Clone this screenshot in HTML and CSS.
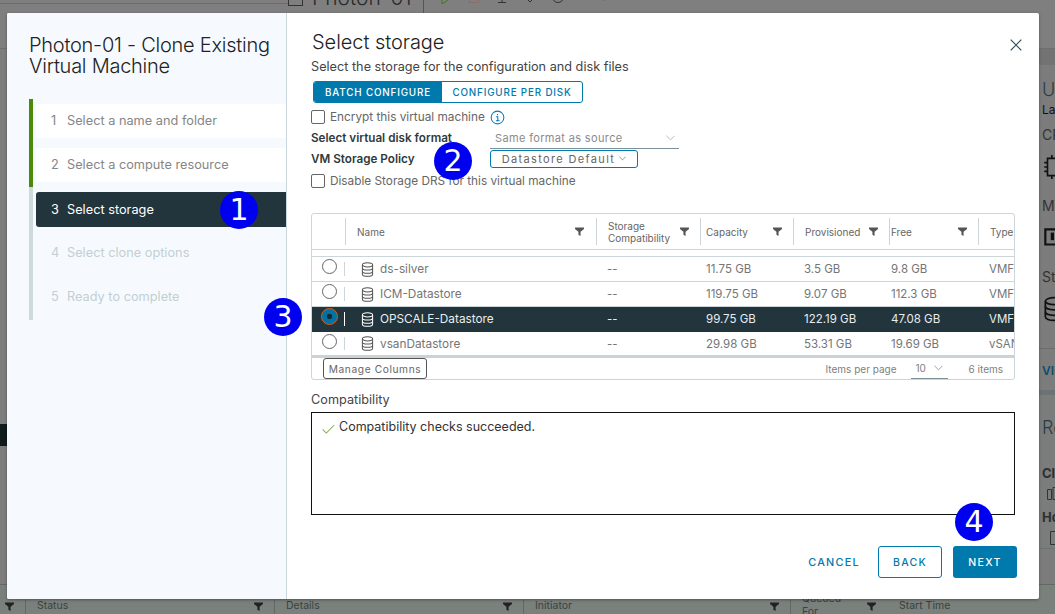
FILE: index.html
```html
<!DOCTYPE html>
<html lang="en">
<head>
<meta charset="utf-8">
<title>Photon-01 - Clone Existing Virtual Machine</title>
<link rel="stylesheet" href="styles.css">
</head>
<body>
<svg class="sprites" width="0" height="0" aria-hidden="true">
  <symbol id="funnel" viewBox="0 0 10 10"><path d="M0 0.5h10v1.6L6.2 5.4V10L3.8 8.6V5.4L0 2.1z"/></symbol>
  <symbol id="db" viewBox="0 0 14 16"><g fill="none" stroke="currentColor" stroke-width="1.1"><path d="M1.5 3v10c0 1.3 2.5 2.3 5.500 2.300s5.500-1 5.500-2.300V3"/><ellipse cx="7" cy="3" rx="5.500" ry="2.200"/><path d="M1.500 6.300c0 1.300 2.500 2.200 5.500 2.200s5.500-.9 5.500-2.200M1.500 9.800c0 1.300 2.500 2.200 5.500 2.200s5.500-.9 5.500-2.200"/></g></symbol>
</svg>

<div class="backdrop">
  <header class="bg-top">
    <div class="bg-toolbar">
      <span class="bg-vmicon"></span>
      <span class="bg-name">Photon-01</span>
      <span class="bg-div"></span>
      <svg class="bg-tool" viewBox="0 0 12 12"><path d="M2 0v12l9-6z" fill="none" stroke="#3f7a1f"/></svg>
      <svg class="bg-tool" viewBox="0 0 12 12"><path d="M1.500 1.500h9v9h-9z" fill="none" stroke="#8c6b6b"/></svg>
      <svg class="bg-tool" viewBox="0 0 12 12"><path d="M0 4h12M6 4v6M2 10.500h8" fill="none" stroke="#333"/></svg>
      <svg class="bg-tool" viewBox="0 0 12 12"><path d="M1 5l5 5 5-5M3 3l5 5" fill="none" stroke="#333"/></svg>
      <svg class="bg-tool" viewBox="0 0 12 12"><path d="M1 6c0 6 10 6 10 0" fill="none" stroke="#333"/></svg>
      <span class="bg-actions">⋮ ACTIONS</span>
    </div>
  </header>
  <div class="bg-mid">
    <div class="bg-left"><span class="bg-dark"></span></div>
    <aside class="bg-right">
      <section class="bg-card">
        <div class="bg-h">U</div>
        <div class="bg-s">Last</div>
        <div class="bg-l">CPU</div>
        <svg class="bg-ic" viewBox="0 0 20 24"><path d="M4 4h12v16H4zM1 8h3M1 12h3M1 16h3M8 1v3M12 1v3M8 20v3M12 20v3" fill="none" stroke="#111" stroke-width="1.500"/></svg>
        <div class="bg-l">Mem</div>
        <svg class="bg-ic" viewBox="0 0 20 24"><path d="M2 4h18v14H2z" fill="none" stroke="#111" stroke-width="2"/><path d="M7 7h3v7H7z" fill="#111"/></svg>
        <div class="bg-l">Sto</div>
        <svg class="bg-ic db-ic"><use href="#db"/></svg>
        <div class="bg-view">VIEW</div>
      </section>
      <section class="bg-card2">
        <div class="bg-h">Re</div>
        <div class="bg-b">Cl</div>
        <svg class="bg-ic2 i1" viewBox="0 0 20 14"><path d="M.5 2.500h4v10h-4zM6 .5h13v12H6z" fill="none" stroke="#333"/></svg>
        <div class="bg-b">Ho</div>
        <svg class="bg-ic2 i2" viewBox="0 0 20 14"><path d="M.5.5h13v13H.5z" fill="none" stroke="#333"/><path d="M7 9h4v3H7z" fill="#333"/></svg>
      </section>
    </aside>
  </div>
  <div class="bg-table">
    <span class="bg-col c1"><svg class="fn"><use href="#funnel"/></svg></span>
    <span class="bg-col c2">Status<svg class="fn"><use href="#funnel"/></svg></span>
    <span class="bg-col c3">Details<svg class="fn"><use href="#funnel"/></svg></span>
    <span class="bg-col c4">Initiator<svg class="fn"><use href="#funnel"/></svg></span>
    <span class="bg-col c5"><span class="two">Queued<br>For</span><svg class="fn"><use href="#funnel"/></svg></span>
    <span class="bg-col c6">Start Time</span>
  </div>
</div>

<div class="modal" role="dialog" aria-label="Clone Existing Virtual Machine">
  <nav class="side">
    <h1 class="wiz-title">Photon-01 - Clone Existing Virtual Machine</h1>
    <ol class="steps">
      <li class="step done"><span class="n">1</span>Select a name and folder</li>
      <li class="step done"><span class="n">2</span>Select a compute resource</li>
      <li class="step current"><span class="n">3</span>Select storage</li>
      <li class="step off"><span class="n">4</span>Select clone options</li>
      <li class="step off"><span class="n">5</span>Ready to complete</li>
    </ol>
  </nav>
  <main class="main">
    <button class="close" aria-label="Close"><svg viewBox="0 0 12 12" width="12" height="12"><path d="M.7.7l10.600 10.600M11.300.7L.7 11.300" fill="none" stroke="#2f4a55" stroke-width="1.200"/></svg></button>
    <h2 class="page-title">Select storage</h2>
    <p class="sub">Select the storage for the configuration and disk files</p>
    <div class="toggle"><span class="tg on">BATCH CONFIGURE</span><span class="tg">CONFIGURE PER DISK</span></div>
    <label class="chk r-enc"><span class="box"></span>Encrypt this virtual machine
      <svg class="info" viewBox="0 0 16 16" width="15" height="15"><circle cx="8" cy="8" r="6.800" fill="none" stroke="#0079b8" stroke-width="1.100"/><path d="M8 4.200v1.300M6.500 7.200H8.300v4.300M6.300 11.500h4" fill="none" stroke="#0079b8" stroke-width="1.100"/></svg>
    </label>
    <div class="frow r-fmt"><span class="flabel">Select virtual disk format</span>
      <span class="select">Same format as source<svg class="chev" viewBox="0 0 10 6" width="9" height="6"><path d="M.5.5L5 5 9.500.5" fill="none" stroke="#b3b3b3"/></svg></span>
    </div>
    <div class="frow r-pol"><span class="flabel">VM Storage Policy</span>
      <span class="policy">Datastore Default<svg class="chev" viewBox="0 0 10 6" width="7" height="5"><path d="M.5.5L5 5 9.500.5" fill="none" stroke="#666"/></svg></span>
    </div>
    <label class="chk r-drs"><span class="box"></span>Disable Storage DRS for this virtual machine</label>

    <div class="grid">
      <div class="row head">
        <span class="cell"></span>
        <span class="cell h nmh"><span>Name</span><svg class="fn"><use href="#funnel"/></svg></span>
        <span class="cell h"><span>Storage<br>Compatibility</span><svg class="fn"><use href="#funnel"/></svg></span>
        <span class="cell h cap"><span>Capacity</span><svg class="fn"><use href="#funnel"/></svg></span>
        <span class="cell h"><span>Provisioned</span><svg class="fn"><use href="#funnel"/></svg></span>
        <span class="cell h free"><span>Free</span><svg class="fn"><use href="#funnel"/></svg></span>
        <span class="cell h"><span>Type</span></span>
      </div>
      <div class="strip"></div>
      <div class="row body">
        <span class="cell rad"><span class="radio"></span></span>
        <span class="cell nm"><svg class="dbi"><use href="#db"/></svg>ds-silver</span>
        <span class="cell">--</span><span class="cell cap">11.75 GB</span><span class="cell">3.5 GB</span><span class="cell free">9.8 GB</span><span class="cell">VMFS</span>
      </div>
      <div class="row body">
        <span class="cell rad"><span class="radio"></span></span>
        <span class="cell nm"><svg class="dbi"><use href="#db"/></svg>ICM-Datastore</span>
        <span class="cell">--</span><span class="cell cap">119.75 GB</span><span class="cell">9.07 GB</span><span class="cell free">112.3 GB</span><span class="cell">VMFS</span>
      </div>
      <div class="row body sel">
        <span class="cell rad"><span class="radio checked"></span></span>
        <span class="cell nm"><svg class="dbi"><use href="#db"/></svg>OPSCALE-Datastore</span>
        <span class="cell">--</span><span class="cell cap">99.75 GB</span><span class="cell">122.19 GB</span><span class="cell free">47.08 GB</span><span class="cell">VMFS</span>
      </div>
      <div class="row body last">
        <span class="cell rad"><span class="radio"></span></span>
        <span class="cell nm"><svg class="dbi"><use href="#db"/></svg>vsanDatastore</span>
        <span class="cell">--</span><span class="cell cap">29.98 GB</span><span class="cell">53.31 GB</span><span class="cell free">19.69 GB</span><span class="cell">vSAN</span>
      </div>
      <div class="gfoot">
        <button class="manage">Manage Columns</button>
        <span class="pager"><span>Items per page</span><span class="pp">10<svg class="chev" viewBox="0 0 10 6" width="9" height="6"><path d="M.5.5L5 5 9.500.5" fill="none" stroke="#999"/></svg></span><span>6 items</span></span>
      </div>
    </div>

    <div class="compat-label">Compatibility</div>
    <div class="compat"><svg viewBox="0 0 14 10" width="13" height="10"><path d="M.7 5.500L4.600 9.300 13.300.7" fill="none" stroke="#7cb342" stroke-width="1.100"/></svg>Compatibility checks succeeded.</div>

    <div class="actions">
      <button class="btn link">CANCEL</button>
      <button class="btn outline">BACK</button>
      <button class="btn primary">NEXT</button>
    </div>
  </main>
</div>

<span class="marker m1">1</span>
<span class="marker m2">2</span>
<span class="marker m3">3</span>
<span class="marker m4">4</span>
</body>
</html>
```

FILE: styles.css
```css
* { box-sizing: border-box; }
html, body { margin: 0; padding: 0; width: 1055px; height: 614px; overflow: hidden; }
body { position: relative; background: #7f7f7f; font-family: Inter, "Open Sans", sans-serif; color: #333; }
.sprites { position: absolute; }
ol, h1, h2, p { margin: 0; padding: 0; list-style: none; font-weight: 400; }
button { font-family: inherit; background: none; border: 0; padding: 0; }

/* backdrop */
.backdrop { height: 614px; display: flex; flex-direction: column; background: #7d7d7d; color: #333; }
.bg-top { height: 49px; flex: none; border-bottom: 1px solid #6f6f6f; background: linear-gradient(#6b6b6b, #6b6b6b) 0 3px / 288px 1px no-repeat #7f7f7f; }
.bg-toolbar { height: 13px; overflow: hidden; display: flex; align-items: flex-end; padding-left: 288px; }
.bg-vmicon { width: 15px; height: 14px; border: 1px solid #333; flex: none; margin: 0 9px 7px 0; }
.bg-name { font-size: 21px; line-height: 24px; font-weight: 300; color: #2b2b2b; width: 111px; flex: none; margin-bottom: 3px; white-space: nowrap; }
.bg-div { width: 1px; height: 13px; background: #555; flex: none; margin-right: 16px; }
.bg-tool { width: 12px; height: 12px; flex: none; margin: 0 16px 9px 0; }
.bg-actions { margin: 0 0 10px 18px; font-size: 11px; line-height: 14px; font-weight: 600; letter-spacing: 1px; color: #0a4a66; white-space: nowrap; }
.bg-mid { flex: 1; display: flex; justify-content: space-between; min-height: 0; }
.bg-left { width: 7px; padding-top: 375px; }
.bg-dark { display: block; height: 22px; background: #0e1c1c; }
.bg-right { width: 16px; overflow: hidden; white-space: nowrap; background: #7c7c7c; border-top: 16px solid #737373; }
.bg-card { height: 330px; padding: 14px 0 0 3px; border-bottom: 5px solid #6d7375; }
.bg-h { font-size: 18px; line-height: 22px; color: #2b3a42; font-weight: 300; }
.bg-s { font-size: 12px; line-height: 16px; color: #111; margin-top: 1px; }
.bg-l { font-size: 14px; line-height: 18px; color: #333; margin-top: 8px; }
.bg-ic { display: block; width: 22px; height: 26px; margin: 10px 0 17px 1px; }
.db-ic { color: #111; width: 22px; height: 26px; margin-bottom: 0; }
.bg-view { font-size: 12px; font-weight: 600; line-height: 16px; color: #0c4d6b; margin: 26px 0 0 -3px; padding: 14px 0 0 3px; border-top: 1px solid #6c6c6c; }
.bg-card2 { padding: 22px 0 0 3px; background: #7a7d7c; height: 154px; border-bottom: 1px solid #6d7371; }
.bg-card2 .bg-h { margin-bottom: 26px; }
.bg-b { font-size: 13px; font-weight: 700; line-height: 16px; color: #2f2f2f; }
.bg-ic2 { display: block; width: 20px; height: 14px; margin: 6px 0 8px 0; }
.i1 { margin-left: 5px; }
.i2 { margin-left: 8px; }
.bg-table { height: 30px; flex: none; display: flex; background: #7a807c; border-top: 1px solid #666; font-size: 10.500px; color: #3a4240; padding-top: 15px; }
.bg-col { height: 14px; flex: none; display: flex; justify-content: space-between; align-items: flex-start; line-height: 11px; padding: 0 11px; border-right: 1px solid #666; }
.bg-col .fn { width: 9px; height: 9px; fill: #222; flex: none; margin-top: 2px; }
.c1 { width: 26px; padding-left: 5px; }
.c2 { width: 249px; } .c3 { width: 249px; } .c4 { width: 267px; }
.c5 { width: 97px; padding-right: 12px; border-right: 0; }
.c6 { width: 160px; border-right: 0; }
.two { margin-top: -8px; line-height: 13px; }

/* modal */
.modal { position: absolute; left: 7px; top: 13px; width: 1032px; height: 586px; display: flex; background: #fff; border-radius: 2px; box-shadow: 0 1px 3px rgba(0,0,0,.35); overflow: hidden; }
.side { width: 280px; flex: none; background: #f6faff; border-right: 1px solid #c9d6dc; padding: 22px 0 0 22px; }
.wiz-title { font-size: 20px; line-height: 21px; font-weight: 300; color: #222; letter-spacing: -.25px; width: 255px; }
.steps { margin-top: 22px; width: 236px; border-left: 4px solid #cdd9dc; position: relative; padding-top: 5px; height: 221px; }
.steps::before { content: ""; position: absolute; left: -4px; top: 0; width: 4px; height: 88px; background: #4a8a0b; }
.step { height: 34px; margin: 0 -21px 10px 3px; display: flex; align-items: center; font-size: 12.750px; padding: 0 0 2px 15px; white-space: nowrap; color: #868686; }
.step .n { width: 16px; flex: none; }
.done { background: #fff; }
.current { background: #22343c; color: #fff; height: 35px; padding-bottom: 0; border-radius: 3px 0 0 3px; margin-bottom: 9px; }
.off { color: #c3cfd2; }

.main { flex: 1; position: relative; padding: 17px 0 0 0; min-width: 0; color: #333; }
.main > * { margin-left: 24px; }
.close { position: absolute; right: 17px; top: 26px; width: 12px; height: 12px; margin: 0; display: block; }
.close svg { display: block; }
.page-title { font-size: 20px; line-height: 24px; font-weight: 300; color: #222; margin-left: 25px; letter-spacing: -.05px; }
.sub { font-size: 12.700px; line-height: 16px; margin-top: 5px; color: #444; }
.toggle { display: flex; margin-top: 6px; margin-left: 26px; width: 270px; height: 22px; border: 1px solid #0079ad; border-radius: 3px; overflow: hidden; }
.tg { display: flex; align-items: center; justify-content: center; font-size: 9.800px; letter-spacing: .85px; font-weight: 500; color: #0079ad; flex: 1 1 auto; white-space: nowrap; }
.tg.on { background: #0079ad; color: #fff; width: 128px; flex: none; }
.chk { display: flex; align-items: center; font-size: 11.800px; color: #666; white-space: nowrap; height: 16px; }
.box { width: 14px; height: 14px; border: 1px solid #666; border-radius: 2px; margin-right: 5px; flex: none; background: #fff; }
.info { margin-left: 5px; }
.r-enc { margin-top: 6px; }
.frow { display: flex; align-items: center; white-space: nowrap; }
.flabel { font-size: 11.700px; font-weight: 600; color: #2f3a40; width: 178px; flex: none; }
.r-fmt { height: 22px; margin-top: 2px; }
.select { display: flex; justify-content: space-between; align-items: center; width: 189px; height: 22px; padding: 0 4px 0 5px; border-bottom: 1px solid #7d8f98; font-size: 11px; letter-spacing: .35px; color: #8a8a8a; margin-left: 1px; }
.r-pol { height: 19px; margin-top: 0; }
.policy { display: flex; align-items: center; justify-content: center; gap: 4px; width: 148px; height: 18px; margin-left: 1px; border: 1px solid #0079ad; border-radius: 3px; font-size: 11px; letter-spacing: 1.350px; color: #666; }
.r-drs { margin-top: 5px; }

.grid { margin-top: 24px; width: 704px; height: 167px; border: 1px solid #ccd6da; border-radius: 3px; overflow: hidden; font-size: 11.500px; color: #757575; background: #fff; }
.row { display: grid; grid-template-columns: 33px 251px 104px 93px 96px 89px 37px; }
.cell { display: flex; align-items: center; padding-left: 11px; white-space: nowrap; overflow: hidden; min-width: 0; }
.head { height: 36px; font-size: 10px; color: #666; border-bottom: 1px solid #ccd6da; }
.head .cell { margin: 4px 0; border-left: 1px solid #ccd6da; justify-content: space-between; padding-right: 11px; line-height: 12px; }
.head .cell:first-child { border-left: 0; }
.head .cell:last-child { padding-right: 0; }
.head .nmh { padding-right: 12px; }
.grid .fn { width: 9px; height: 9px; fill: #555; flex: none; }
.cap { padding-left: 6px; }
.head .cap { padding-left: 5px; }
.free { padding-left: 2px; }
.head .free { padding-left: 1px; }
.strip { height: 7px; border-bottom: 1px solid #ccd6da; }
.body { height: 25px; border-bottom: 1px solid #ccd6da; }
.body.last { height: 26px; border-bottom: 3px solid #ccd3d6; }
.sel { background: #22343c; color: #e8eef0; border-bottom-color: #22343c; }
.rad { padding-left: 10px; position: relative; overflow: visible; }
.rad::after { content: ""; position: absolute; right: 0; top: 5px; bottom: 5px; width: 1px; background: #ccd6da; }
.sel .rad::after { background: #fff; }
.radio { width: 15px; height: 15px; border: 1px solid #666; border-radius: 50%; background: #fff; margin-top: -5px; flex: none; }
.radio.checked { width: 17px; height: 17px; margin-left: -1px; margin-right: -1px; border: 1px solid #d2601a; background: radial-gradient(circle, #102a36 0 2.500px, #0072a3 3px); }
.nm { padding-left: 16px; font-size: 11.800px; }
.dbi { width: 13px; height: 15px; margin-right: 6px; flex: none; color: #555; }
.sel .dbi { color: #fff; }
.gfoot { display: flex; justify-content: space-between; align-items: center; height: 21px; padding-left: 11px; }
.manage { height: 21px; width: 104px; border: 1px solid #555; border-radius: 3px; font-size: 10.200px; letter-spacing: .6px; color: #666; white-space: nowrap; }
.pager { display: flex; align-items: center; font-size: 10px; color: #808080; padding-right: 11px; white-space: nowrap; }
.pp { display: flex; align-items: center; justify-content: space-between; width: 37px; height: 21px; margin: 0 21px 0 14px; padding: 0 5px; border-bottom: 1px solid #7d8f98; }
.compat-label { font-size: 12.700px; line-height: 16px; margin-top: 12px; color: #444; }
.compat { display: flex; align-items: flex-start; gap: 4px; width: 704px; height: 103px; margin-top: 4px; padding: 6px 10px; border: 1.500px solid #111; font-size: 12.500px; line-height: 16px; color: #333; }
.compat svg { margin-top: 5px; flex: none; }
.actions { display: flex; justify-content: flex-end; align-items: center; gap: 11px; margin: 31px 22px 0 0; }
.btn { height: 32px; width: 64px; border-radius: 3px; font-size: 10.500px; letter-spacing: 1.300px; font-weight: 500; color: #0079ad; }
.link { width: auto; margin-right: 7px; font-size: 10.800px; }
.outline { border: 1px solid #0079ad; }
.primary { background: #0079ad; color: #fff; }

.marker { position: absolute; width: 38px; height: 38px; border-radius: 50%; background: #0000f0; color: #fff; font-family: "DejaVu Sans", sans-serif; font-size: 30px; line-height: 38px; text-align: center; }
.m1 { left: 220px; top: 191px; }
.m2 { left: 434px; top: 142px; }
.m3 { left: 264px; top: 298px; }
.m4 { left: 955px; top: 503px; }
```
